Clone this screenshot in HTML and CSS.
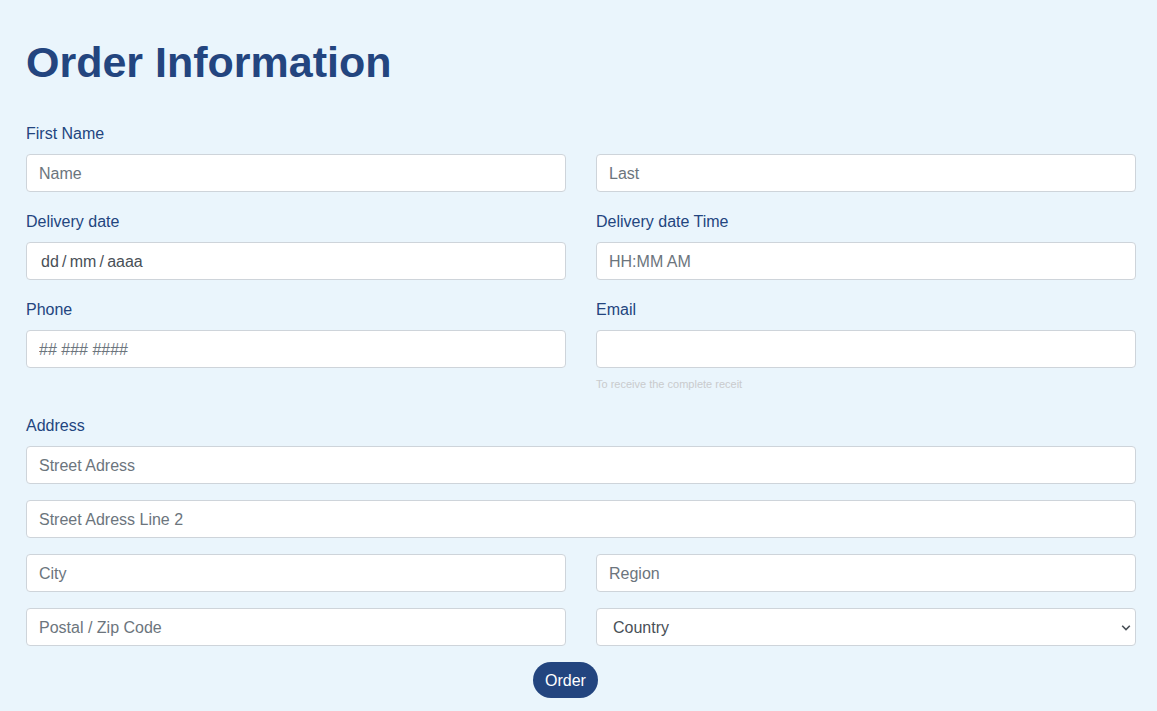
FILE: index.html
```html
<!DOCTYPE html>
<html lang="en">
<head>
<meta charset="utf-8">
<title>Order Information</title>
<link rel="stylesheet" href="styles.css">
</head>
<body>
<form class="order">
  <h1 class="title">Order Information</h1>
  <div class="row">
    <div class="field">
      <label for="first">First Name</label>
      <input class="control" id="first" type="text" placeholder="Name">
    </div>
    <div class="field">
      <input class="control" type="text" placeholder="Last" aria-label="Last name">
    </div>
  </div>
  <div class="row">
    <div class="field">
      <label for="date">Delivery date</label>
      <input class="control date" id="date" type="text" value="dd&thinsp;/&thinsp;mm&thinsp;/&thinsp;aaaa">
    </div>
    <div class="field">
      <label for="time">Delivery date Time</label>
      <input class="control" id="time" type="text" placeholder="HH:MM AM">
    </div>
  </div>
  <div class="row contact">
    <div class="field">
      <label for="phone">Phone</label>
      <input class="control" id="phone" type="tel" placeholder="## ### ####">
    </div>
    <div class="field">
      <label for="email">Email</label>
      <input class="control" id="email" type="email" aria-describedby="email-help">
      <small class="help" id="email-help">To receive the complete receit</small>
    </div>
  </div>
  <div class="field">
    <label for="street">Address</label>
    <input class="control" id="street" type="text" placeholder="Street Adress">
  </div>
  <div class="field">
    <input class="control" type="text" placeholder="Street Adress Line 2" aria-label="Street address line 2">
  </div>
  <div class="row">
    <div class="field"><input class="control" type="text" placeholder="City" aria-label="City"></div>
    <div class="field"><input class="control" type="text" placeholder="Region" aria-label="Region"></div>
  </div>
  <div class="row">
    <div class="field"><input class="control" type="text" placeholder="Postal / Zip Code" aria-label="Postal or zip code"></div>
    <div class="field picker">
      <select class="control select" aria-label="Country"><option>Country</option></select>
      <svg class="chevron" width="10" height="6" viewBox="0 0 10 6" aria-hidden="true"><path d="M1.2 0.8 5 4.6 8.8 0.8" fill="none" stroke="#495057" stroke-width="1.6"/></svg>
    </div>
  </div>
  <div class="actions"><button class="submit" type="button">Order</button></div>
</form>
</body>
</html>
```
FILE: styles.css
```css
* {
  box-sizing: border-box;
}

body {
  margin: 0;
  background: #eaf5fc;
  color: #23457f;
  font: 16px/24px "Liberation Sans", Arial, sans-serif;
}

.order {
  padding: 36px 21px 13px 26px;
}

.title {
  margin: 0 0 32px;
  font-size: 43px;
  line-height: 52px;
}

.row {
  display: grid;
  grid-template-columns: 1fr 1fr;
  column-gap: 30px;
  align-items: end;
}

.contact {
  align-items: start;
}

.field {
  margin-bottom: 16px;
}

label {
  display: block;
  width: fit-content;
  padding-top: 2px;
  margin-bottom: 8px;
}

.control {
  display: block;
  width: 100%;
  height: 38px;
  padding: 7px 12px 5px;
  border: 1px solid #ced4da;
  border-radius: 4px;
  background: #fff;
  color: #495057;
  font: inherit;
}

.control::placeholder {
  color: #6c757d;
  opacity: 1;
}

.date {
  padding-left: 14px;
}

.picker {
  position: relative;
}

.select {
  padding: 7px 16px 5px;
  appearance: none;
}

.chevron {
  position: absolute;
  top: 17px;
  right: 5px;
  pointer-events: none;
}

.help {
  display: block;
  margin-top: 4px;
  color: #c9cbcd;
  font-size: 11px;
}

.actions {
  display: flex;
  justify-content: center;
  padding-right: 31px;
}

.submit {
  height: 36px;
  padding: 2px 12px 0;
  border: 0;
  border-radius: 18px;
  background: #23457f;
  color: #fff;
  font: inherit;
}
```
